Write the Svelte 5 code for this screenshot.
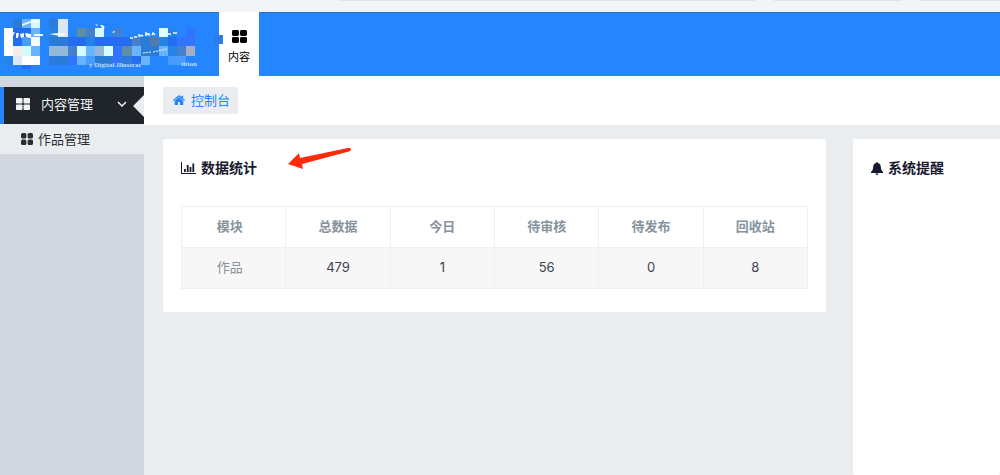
<script lang="ts">
    const columns = ["模块", "总数据", "今日", "待审核", "待发布", "回收站"];
    const rows = [
        { name: "作品", counts: [479, 1, 56, 0, 8] },
    ];

    // one string per row of the logo mosaic, "." leaves the header visible
    const palette: Record<string, string> = {
        w: "#fbfdff",
        c: "#d5fbff",
        l: "#dde6f5",
        p: "#f3ece8",
        g: "#93b8d8",
        s: "#68b4ff",
        m: "#489cff",
        t: "#2483e6",
        d: "#2b7bd8",
        k: "#537cae",
        o: "#5c8fa6",
        b: "#256df0",
        v: "#3374ff",
        n: "#4580cf",
        r: "#a9adc4",
    };
    const mosaic = [
        ".dsc.dl...............",
        "wbbs.tl.onc.n....ct.v.",
        "wbmw.ddbbtbbbbndktbvv.",
        "wpcs.ggncsgcvosddstnr.",
        "tlww.ddvsmddvdbs..mm..",
        "..b...................",
    ];
    const cells = mosaic.flatMap((line, y) =>
        [...line].map((key, x) => ({ x, y, fill: palette[key] })).filter((cell) => cell.fill)
    );
</script>

<div class="page">
    <div class="browser">
        <span class="address"></span>
        <span class="tool"></span>
        <span class="rest"></span>
    </div>

    <header>
        <a class="logo" href="#home" aria-label="首页">
            <svg viewBox="0 0 219 64" width="219" height="64">
                <g transform="translate(3.7 7.1) scale(9.13)" shape-rendering="crispEdges">
                    {#each cells as cell}
                        <rect x={cell.x} y={cell.y} width="1" height={cell.y === 5 ? 0.5 : 1} fill={cell.fill} />
                    {/each}
                </g>
                <rect x="214" y="23" width="9" height="9" fill="#2b7be8" />
                <g fill="#f4fbff">
                    <path d="M10 21l5-1-3 6zM16 21h3l-1 5h-2zM20 22l4-1v4l-3 1zM22 12l9-3 9-1v2l-10 1-8 3zM25 21l6 1v4l-5-1zM34 22h9v2h-9zM32 29l8-2v2l-8 1zM49 22l10-1 9 1-8 2z" />
                    <path d="M95 12l3 1-1 1zM100 13q6 0 4 4l-4 3 2-4zM112 20l3-1-1 2z" />
                </g>
                <g fill="none" stroke="#f4fbff">
                    <path d="M130 26h3M134 25h3M139 25v-2l3 1 1-1M146 24v-3l3 2v-2M152 23l1-2 2 2M160 18l4 1-1 4-3 1zM167 22h4M173 21h4" stroke-width="1.5" />
                    <path d="M143 41l8-1M153 40l14-3" stroke-dasharray="2 1" />
                </g>
                <text x="89" y="55">y Digital Illustrat</text>
                <text x="181" y="54">tition</text>
            </svg>
        </a>
        <nav>
            <a class="tab" href="#content">
                <svg viewBox="0 0 14 12" width="15" height="13">
                    <rect width="6.5" height="5.5" rx="1.3" />
                    <rect x="7.5" width="6.5" height="5.5" rx="1.3" />
                    <rect y="6.5" width="6.5" height="5.5" rx="1.3" />
                    <rect x="7.5" y="6.5" width="6.5" height="5.5" rx="1.3" />
                </svg>
                内容
            </a>
        </nav>
    </header>

    <div class="body">
        <aside>
            <button class="group" aria-expanded="true">
                <svg viewBox="0 0 14 12" width="14" height="12" fill="currentColor">
                    <rect width="6.5" height="5.5" rx="0.8" />
                    <rect x="7.5" width="6.5" height="5.5" rx="0.8" />
                    <rect y="6.5" width="6.5" height="5.5" rx="0.8" />
                    <rect x="7.5" y="6.5" width="6.5" height="5.5" rx="0.8" />
                </svg>
                <span>内容管理</span>
                <svg class="chevron" viewBox="0 0 10 6" width="10" height="6">
                    <path d="M1 1l4 4 4-4" fill="none" stroke="currentColor" stroke-width="1.5" />
                </svg>
            </button>
            <a class="item" href="#works">
                <svg viewBox="0 0 12 12" width="12" height="12" fill="currentColor">
                    <rect width="5.4" height="5.4" rx="1.5" />
                    <rect x="6.6" width="5.4" height="5.4" rx="1.5" />
                    <rect y="6.6" width="5.4" height="5.4" rx="1.5" />
                    <rect x="6.6" y="6.6" width="5.4" height="5.4" rx="1.5" />
                </svg>
                作品管理
            </a>
        </aside>

        <main>
            <div class="crumbs">
                <a href="#dashboard">
                    <svg viewBox="0 0 12 10" width="12" height="10" fill="currentColor">
                        <path d="M6 0L0 5.1l.7.8L6 1.500l5.300 4.400.7-.8-1.900-1.600V.7H8.500v1.400z" />
                        <path d="M6 2.100L1.700 5.700v3.800q0 .5.500.5H5V7h2v3h2.800q.5 0 .5-.5V5.700z" />
                    </svg>
                    控制台
                </a>
            </div>

            <div class="cards">
                <section class="stats">
                    <h2>
                        <svg viewBox="0 0 15 12" width="15" height="12" fill="currentColor">
                            <path d="M0 0h1v11h14v1H0zM3 7h1.800v3H3zM5.800 3h1.800v7H5.800zM8.600 5h1.800v5H8.600zM11.400 1.500h1.800V10h-1.800z" />
                        </svg>
                        数据统计
                        <svg class="arrow" viewBox="0 0 64 22" width="64" height="22">
                            <path d="M0 16L11 5l1 5L60 0q3-.5 3 1.500Q63 3 61 3.500L14 16l1 5z" fill="#ff2a0b" />
                        </svg>
                    </h2>
                    <table>
                        <thead>
                            <tr>
                                {#each columns as column}
                                    <th scope="col">{column}</th>
                                {/each}
                            </tr>
                        </thead>
                        <tbody>
                            {#each rows as row}
                                <tr>
                                    <td class="name">{row.name}</td>
                                    {#each row.counts as count}
                                        <td>{count}</td>
                                    {/each}
                                </tr>
                            {/each}
                        </tbody>
                    </table>
                </section>

                <section class="notices">
                    <h2>
                        <svg viewBox="0 0 12 13" width="12" height="13" fill="currentColor">
                            <path d="M6 0q.8 0 .8 1Q9.800 1.600 9.800 5q0 3.500 2.200 5v1H0v-1q2.200-1.500 2.200-5 0-3.400 3-4Q5.200 0 6 0zM4.500 11.500h3q-.3 1.500-1.500 1.500t-1.500-1.500z" />
                        </svg>
                        系统提醒
                    </h2>
                </section>
            </div>
        </main>
    </div>
</div>

<style>
    :global(body) {
        margin: 0;
    }

    .page {
        display: flex;
        flex-direction: column;
        min-height: 100vh;
        box-sizing: border-box;
        background: #e9edf0;
        font-family: Inter, "Noto Sans CJK SC", sans-serif;
        font-size: 13px;
        line-height: 20px;
        color: #3d4250;
    }

    a {
        color: inherit;
        text-decoration: none;
    }

    svg {
        flex: none;
    }

    .browser {
        display: flex;
        gap: 18px;
        height: 12px;
        padding-left: 339px;
        background: #f3f4f6;
    }

    .browser span {
        height: 1px;
        background: #e3e4e6;
    }

    .address {
        flex: 1;
    }

    .tool {
        width: 128px;
    }

    .rest {
        width: 80px;
    }

    header {
        display: flex;
        height: 64px;
        box-sizing: border-box;
        background: #2585ff;
        box-shadow: inset 0 1px #2670cc;
    }

    .logo {
        position: relative;
        z-index: 1;
    }

    .logo svg {
        display: block;
        overflow: visible;
    }

    .logo text {
        fill: #b9dcff;
        font: bold 7px "Liberation Serif", serif;
    }

    .tab {
        display: flex;
        flex-direction: column;
        align-items: center;
        gap: 4px;
        width: 40px;
        height: 64px;
        padding-top: 18px;
        box-sizing: border-box;
        background: #fff;
        color: #000;
        font-size: 11px;
    }

    .body {
        display: flex;
        flex: 1;
    }

    aside {
        flex: none;
        width: 144px;
        padding-top: 11px;
        box-sizing: border-box;
        background: #d3d8e0;
    }

    .group {
        position: relative;
        display: flex;
        align-items: center;
        gap: 11px;
        width: 100%;
        height: 37px;
        padding: 0 17px 3px 12px;
        border: none;
        border-left: 4px solid #2585ff;
        background: #20242b;
        color: #f1f3f5;
        font: inherit;
        text-align: left;
    }

    .group::after {
        content: "";
        position: absolute;
        right: 0;
        top: 8px;
        border: 11px solid transparent;
        border-left: none;
        border-right-color: #e9edf0;
    }

    .chevron {
        margin-left: auto;
    }

    .item {
        display: flex;
        align-items: center;
        gap: 5px;
        height: 30px;
        padding-left: 21px;
        background: #e9edf0;
        color: #2b2e33;
    }

    main {
        display: flex;
        flex: 1;
        flex-direction: column;
        min-width: 0;
    }

    .crumbs {
        display: flex;
        padding: 11px 19px;
        background: #fff;
    }

    .crumbs a {
        display: flex;
        align-items: center;
        gap: 6px;
        height: 25px;
        padding: 0 8px 2px 10px;
        background: #e9edf0;
        color: #2585ff;
    }

    .cards {
        display: flex;
        flex: 1;
        align-items: flex-start;
        gap: 27px;
        padding: 14px 0 0 19px;
    }

    section {
        padding: 18px 18px 23px;
        box-sizing: border-box;
        border-radius: 2px;
        background: #fff;
    }

    .stats {
        flex: 1;
    }

    .notices {
        align-self: stretch;
        width: 147px;
    }

    h2 {
        position: relative;
        display: flex;
        align-items: center;
        gap: 5px;
        margin: 0 0 27px;
        font-size: 14px;
        font-weight: 600;
        line-height: 22px;
        color: #171a2e;
    }

    .arrow {
        position: absolute;
        left: 107px;
        top: -9px;
    }

    table {
        width: 100%;
        border-collapse: collapse;
        table-layout: fixed;
    }

    th,
    td {
        padding: 9px 0 11px;
        border: 1px solid #eff0f1;
        text-align: center;
    }

    th:first-child,
    td:first-child {
        padding-right: 8px;
    }

    th,
    .name {
        color: #87929c;
    }

    tbody tr {
        background: #f7f7f7;
    }
</style>
